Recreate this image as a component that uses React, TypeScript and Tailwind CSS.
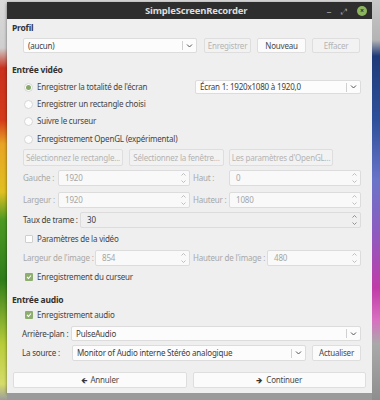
const FONT = "font-['Noto_Sans','DejaVu_Sans',sans-serif]";

function Btn({ label, w, disabled, icon }: { label: string; w: string; disabled?: boolean; icon?: string }) {
  return (
    <div
      className={`flex h-full items-center justify-center gap-[3px] whitespace-nowrap rounded-[2px] border border-[#dedede] ${w} ${
        disabled ? "bg-[#f2f2f2] text-[#b4b4b4]" : "bg-[#fbfbfb] text-[#4a4a4a]"
      }`}
    >
      {icon && <span className="text-[8px] text-[#333]">{icon}</span>}
      {label}
    </div>
  );
}

function Combo({ text, w }: { text: string; w: string }) {
  return (
    <div className={`flex h-full items-center rounded-[2px] border border-[#dcdcdc] bg-[#fcfcfc] ${w}`}>
      <span className="flex-1 truncate pl-[4px] text-[#3e3e3e]">{text}</span>
      <span className="h-[9px] w-px bg-[#d0d0d0]" />
      <svg width="13" height="8" viewBox="0 0 13 8" className="shrink-0">
        <path d="M4 2.5 L6.5 5 L9 2.5" fill="none" stroke="#555" strokeWidth="1" />
      </svg>
    </div>
  );
}

function Spin({ value, w, disabled, tinted }: { value: string; w: string; disabled?: boolean; tinted?: boolean }) {
  return (
    <div
      className={`flex h-full items-center rounded-[2px] border border-[#dcdcdc] ${w} ${
        tinted ? "bg-[#efefef]" : "bg-[#f9f9f9]"
      }`}
    >
      <span className={`flex-1 pl-[6px] ${disabled ? "text-[#a6a6a6]" : "text-[#3a3a3a]"}`}>{value}</span>
      <svg width="9" height="14" viewBox="0 0 9 14" className="mr-[1px] shrink-0">
        <path d="M2.5 4.5 L4.5 2.5 L6.5 4.5" fill="none" stroke={disabled ? "#b0b0b0" : "#777"} strokeWidth="0.8" />
        <path d="M2.5 9.5 L4.5 11.5 L6.5 9.5" fill="none" stroke={disabled ? "#b0b0b0" : "#777"} strokeWidth="0.8" />
      </svg>
    </div>
  );
}

function Radio({ checked, label }: { checked?: boolean; label: string }) {
  return (
    <div className="flex items-center whitespace-nowrap">
      <span className="ml-[12px] mr-[4px] flex h-[9px] w-[9px] items-center justify-center rounded-full border border-[#d6d6d6] bg-[#fdfdfd]">
        {checked && <span className="h-[5px] w-[5px] rounded-full bg-[#86a86a]" />}
      </span>
      <span className="text-[#454545]">{label}</span>
    </div>
  );
}

function Check({ checked, label }: { checked?: boolean; label: string }) {
  return (
    <div className="flex items-center whitespace-nowrap">
      <span
        className={`ml-[13px] mr-[4px] flex h-[8px] w-[8px] items-center justify-center rounded-[1px] ${
          checked ? "bg-[#8eae70]" : "border border-[#cfcfcf] bg-[#fdfdfd]"
        }`}
      >
        {checked && (
          <svg width="6" height="6" viewBox="0 0 6 6">
            <path d="M1 3 L2.5 4.5 L5 1.5" fill="none" stroke="#fff" strokeWidth="1.1" />
          </svg>
        )}
      </span>
      <span className="text-[#454545]">{label}</span>
    </div>
  );
}

export default function App() {
  return (
    <div className={`flex h-[400px] w-[380px] text-[8px] leading-[12px] tracking-[-0.2px] ${FONT}`}>
      <div className="w-[7px] bg-[linear-gradient(to_bottom,#d9d9d9_0%,#cfcfcf_12%,#c9301e_17%,#d43a1a_30%,#e8a424_36%,#e0c020_48%,#4c9a22_55%,#2f7d1a_70%,#b8cc3a_86%,#d6dc6a_96%,#9c9c9c_100%)]" />
      <div className="flex flex-1 flex-col">
        <div className="h-[2px] bg-[#d8d8d8]" />
        <div className="flex h-[391px] flex-col bg-[#efefef] shadow-[0_1px_3px_rgba(0,0,0,0.5)]">
          <div className="flex h-[17px] items-center bg-[#2e2e2e]">
            <span className="ml-[138px] whitespace-nowrap text-[9.5px] font-bold tracking-[-0.2px] text-[#dcdcdc]">
              SimpleScreenRecorder
            </span>
            <span className="ml-auto text-[10px] leading-none text-[#9a9a9a]">–</span>
            <span className="ml-[10px] text-[8px] leading-none text-[#9a9a9a]">⤢</span>
            <span className="ml-[10px] mr-[5px] flex h-[10px] w-[10px] items-center justify-center rounded-full bg-[#8cb55e] text-[7px] font-bold leading-none text-[#2e2e2e]">
              ×
            </span>
          </div>

          <div className="flex flex-col whitespace-nowrap pl-[5px] pr-[11px]">
            <div className="mt-[3px] text-[8.5px] font-bold text-[#333]">Profil</div>
            <div className="mt-[4px] flex h-[15px] gap-[6px] pl-[11px]">
              <Combo text="(aucun)" w="w-[174px] mr-[1px]" />
              <Btn label="Enregistrer" w="w-[47px]" disabled />
              <Btn label="Nouveau" w="w-[49px]" />
              <Btn label="Effacer" w="w-[48px]" disabled />
            </div>

            <div className="mt-[11px] text-[8.5px] font-bold text-[#333]">Entrée vidéo</div>
            <div className="mt-[4px] flex h-[14px] items-center justify-between">
              <Radio checked label="Enregistrer la totalité de l'écran" />
              <Combo text="Écran 1: 1920x1080 à 1920,0" w="w-[166px]" />
            </div>
            <div className="mt-[4px]">
              <Radio label="Enregistrer un rectangle choisi" />
            </div>
            <div className="mt-[5px]">
              <Radio label="Suivre le curseur" />
            </div>
            <div className="mt-[6px]">
              <Radio label="Enregistrement OpenGL (expérimental)" />
            </div>
            <div className="mt-[4px] flex h-[17px] gap-[5px] pl-[11px]">
              <Btn label="Sélectionnez le rectangle..." w="w-[100px] mr-[1px]" disabled />
              <Btn label="Sélectionnez la fenêtre..." w="w-[95px]" disabled />
              <Btn label="Les paramètres d'OpenGL..." w="w-[104px]" disabled />
            </div>

            <div className="mt-[4px] flex h-[16px] items-center pl-[11px] text-[#a8a8a8]">
              <span className="w-[35px] shrink-0">Gauche :</span>
              <Spin value="1920" w="w-[132px]" disabled />
              <span className="ml-[3px] w-[36px] shrink-0">Haut :</span>
              <Spin value="0" w="w-[132px]" disabled />
            </div>
            <div className="mt-[6px] flex h-[16px] items-center pl-[11px] text-[#a8a8a8]">
              <span className="w-[35px] shrink-0">Largeur :</span>
              <Spin value="1920" w="w-[132px]" disabled />
              <span className="ml-[3px] w-[36px] shrink-0">Hauteur :</span>
              <Spin value="1080" w="w-[132px]" disabled />
            </div>
            <div className="mt-[4px] flex h-[16px] items-center pl-[11px] text-[#3e3e3e]">
              <span className="w-[57px] shrink-0">Taux de trame :</span>
              <Spin value="30" w="flex-1" tinted />
            </div>
            <div className="mt-[5px]">
              <Check label="Paramètres de la vidéo" />
            </div>
            <div className="mt-[5px] flex h-[16px] items-center pl-[11px] text-[#a8a8a8]">
              <span className="w-[72px] shrink-0">Largeur de l'image :</span>
              <Spin value="854" w="w-[95px]" disabled />
              <span className="ml-[3px] w-[74px] shrink-0">Hauteur de l'image :</span>
              <Spin value="480" w="w-[94px]" disabled />
            </div>
            <div className="mt-[5px]">
              <Check checked label="Enregistrement du curseur" />
            </div>

            <div className="mt-[11px] text-[8.5px] font-bold text-[#333]">Entrée audio</div>
            <div className="mt-[3px]">
              <Check checked label="Enregistrement audio" />
            </div>
            <div className="mt-[5px] flex h-[15px] items-center pl-[10px] text-[#3e3e3e]">
              <span className="w-[49px] shrink-0">Arrière-plan :</span>
              <Combo text="PulseAudio" w="flex-1" />
            </div>
            <div className="mt-[4px] flex h-[16px] items-center gap-[6px] pl-[10px] text-[#3e3e3e]">
              <span className="-mr-[6px] w-[50px] shrink-0">La source :</span>
              <Combo text="Monitor of Audio interne Stéréo analogique" w="w-[234px] h-[14px]" />
              <Btn label="Actualiser" w="w-[49px]" />
            </div>
          </div>

          <div className="mt-[11px] flex h-[16px] gap-[6px] px-[6px]">
            <Btn label="Annuler" icon="🡸" w="flex-1" />
            <Btn label="Continuer" icon="🡺" w="flex-1" />
          </div>
        </div>
        <div className="flex-1 bg-[#9a9a9a]" />
      </div>
      <div className="w-[8px] bg-[linear-gradient(to_bottom,#c8c8c8_0%,#b4b4b4_10%,#1f3a78_14%,#2d4f9a_30%,#6a74c8_45%,#8c5cc0_58%,#c03ca8_72%,#d870c0_80%,#a9a9a9_86%,#8e8e8e_100%)]" />
    </div>
  );
}
